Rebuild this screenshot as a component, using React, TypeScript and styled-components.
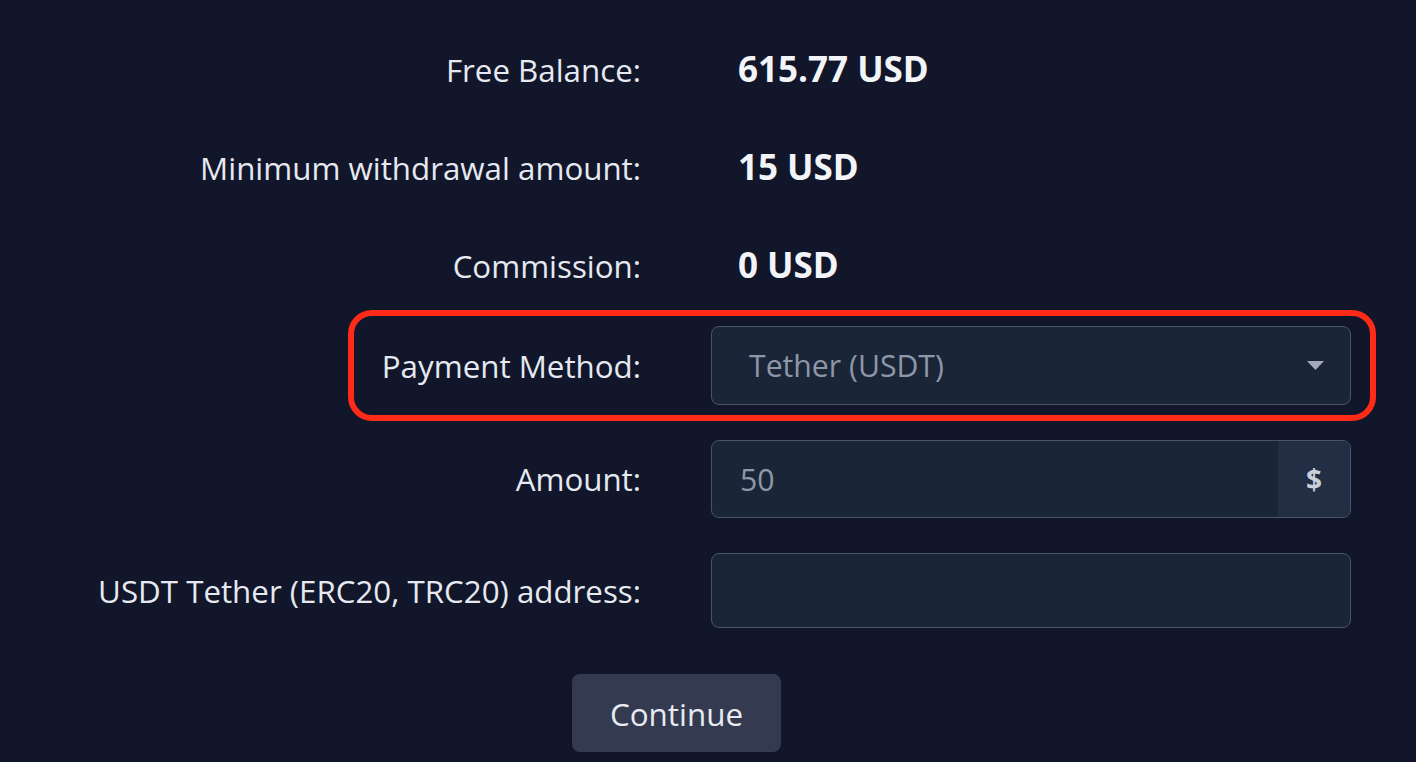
import React from "react";
import styled, { createGlobalStyle } from "styled-components";

const GlobalStyle = createGlobalStyle`
  html, body {
    margin: 0;
    padding: 0;
    height: 762px;
    overflow: hidden;
    background: #11162a;
  }
  body {
    font-family: "Open Sans", "Noto Sans", sans-serif;
    color: #e8eaf0;
  }
`;

const Page = styled.div`
  width: 1416px;
  height: 762px;
  padding-top: 21px;
  box-sizing: border-box;
  background: #11162a;
  display: flex;
  flex-direction: column;
`;

const Row = styled.div<{ $space?: number; $tall?: boolean }>`
  position: relative;
  display: grid;
  grid-template-columns: 641px 640px;
  column-gap: 70px;
  align-items: center;
  margin-top: ${({ $space }) => $space ?? 0}px;
  min-height: ${({ $tall }) => ($tall ? "98px" : "0")};
`;

const Label = styled.div`
  text-align: right;
  font-size: 31.3px;
  font-weight: 400;
  color: #e6e9f0;
  white-space: nowrap;
`;

const Value = styled.div`
  padding-left: 27px;
  margin-top: -4px;
  font-size: 35px;
  font-weight: 700;
  color: #f2f4f8;
`;

const Field = styled.div<{ $height: number }>`
  height: ${({ $height }) => $height}px;
  box-sizing: border-box;
  display: flex;
  align-items: stretch;
  background: #1a2538;
  border: 1.5px solid #4a5468;
  border-radius: 8px;
  overflow: hidden;
`;

const FieldText = styled.div`
  flex: 1;
  display: flex;
  align-items: center;
  padding-left: 28px;
  font-size: 30.2px;
  color: #8e97a8;
`;

const SelectText = styled(FieldText)`
  padding-left: 37px;
`;

const Caret = styled.div`
  display: flex;
  align-items: center;
  padding-right: 26px;
`;

const Addon = styled.div`
  width: 72px;
  display: flex;
  align-items: center;
  justify-content: center;
  background: #232e44;
  font-size: 28px;
  font-weight: 700;
  color: #c9cfdb;
`;

const Highlight = styled.div`
  position: absolute;
  left: 348px;
  right: 40px;
  top: -16px;
  bottom: -16px;
  border: 6px solid #ff2a17;
  border-radius: 24px;
  pointer-events: none;
`;

const Footer = styled.div`
  width: 1353px;
  display: flex;
  justify-content: center;
  margin-top: 46px;
`;

const Button = styled.button`
  width: 209px;
  height: 78px;
  border: none;
  border-radius: 8px;
  background: #343b50;
  color: #e8eaf2;
  font-family: "Open Sans", "Noto Sans", sans-serif;
  font-size: 31.4px;
  cursor: pointer;
`;

const stats = [
  { label: "Free Balance:", value: "615.77 USD" },
  { label: "Minimum withdrawal amount:", value: "15 USD" },
  { label: "Commission:", value: "0 USD" },
];

export default function App() {
  return (
    <Page>
      <GlobalStyle />
      {stats.map((s) => (
        <Row key={s.label} $tall>
          <Label>{s.label}</Label>
          <Value>{s.value}</Value>
        </Row>
      ))}
      <Row $space={11}>
        <Highlight />
        <Label>Payment Method:</Label>
        <Field $height={79}>
          <SelectText>Tether (USDT)</SelectText>
          <Caret>
            <svg width="17" height="9" viewBox="0 0 17 9">
              <path d="M0 0 H17 L8.5 9 Z" fill="#a3abba" />
            </svg>
          </Caret>
        </Field>
      </Row>
      <Row $space={35}>
        <Label>Amount:</Label>
        <Field $height={78}>
          <FieldText>50</FieldText>
          <Addon>$</Addon>
        </Field>
      </Row>
      <Row $space={35}>
        <Label>USDT Tether (ERC20, TRC20) address:</Label>
        <Field $height={75} />
      </Row>
      <Footer>
        <Button>Continue</Button>
      </Footer>
    </Page>
  );
}
